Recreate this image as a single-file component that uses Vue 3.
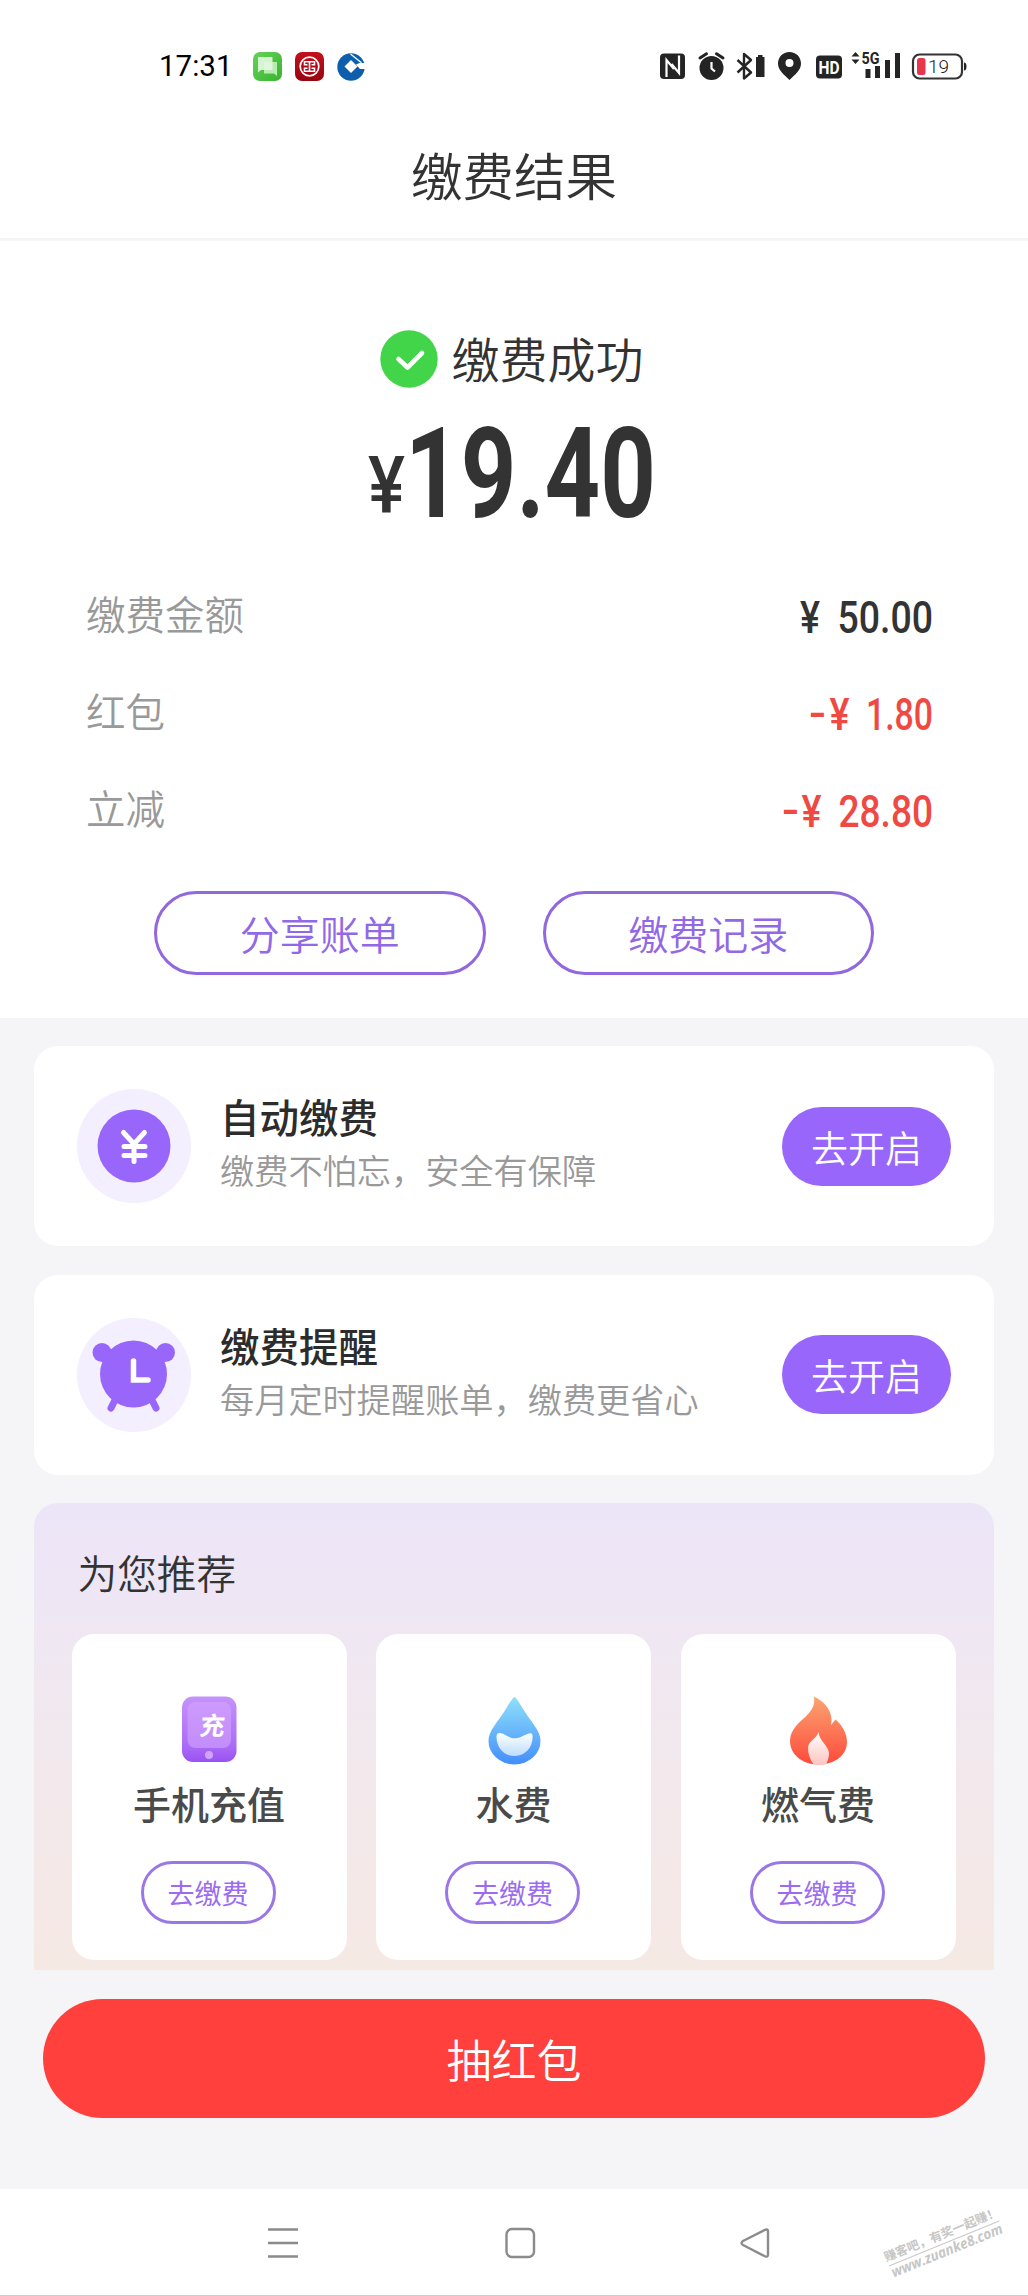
<script setup>
const bills = [
  { label: '缴费金额', minus: null, yen: 800, start: 837.5, value: '50.00' },
  { label: '红包', minus: 809, yen: 829.5, start: 866, value: '1.80', red: true },
  { label: '立减', minus: 782, yen: 801.5, start: 838.5, value: '28.80', red: true },
]
const services = [
  { icon: 'yen', title: '自动缴费', desc: '缴费不怕忘，安全有保障' },
  { icon: 'clock', title: '缴费提醒', desc: '每月定时提醒账单，缴费更省心' },
]
const recommends = [
  { icon: 'phone', name: '手机充值' },
  { icon: 'water', name: '水费' },
  { icon: 'fire', name: '燃气费' },
]
</script>

<template>
  <div class="screen">
    <header class="status">
      <span class="time">17:31</span>
      <svg class="apps" width="114" height="32" viewBox="252 51 114 32">
        <defs>
          <linearGradient id="msg" x1="0" y1="0" x2="1" y2="1"><stop offset="0" stop-color="#67d15c" /><stop offset="1" stop-color="#36b52c" /></linearGradient>
          <linearGradient id="bank" x1="0" y1="0" x2="0" y2="1"><stop offset="0" stop-color="#c4101f" /><stop offset="1" stop-color="#980510" /></linearGradient>
        </defs>
        <rect x="253" y="52" width="29" height="29" rx="7" fill="url(#msg)" />
        <path d="M264 62h13v14l-3-2.500h-10z" fill="#b9ecb2" />
        <path d="M258 57h14.500v13h-11.500l-3 2.500z" fill="#e3f8df" opacity=".9" />
        <rect x="295" y="52" width="29" height="29" rx="7" fill="url(#bank)" />
        <circle cx="309.500" cy="66.500" r="9.300" fill="none" stroke="#fff" stroke-width="1.700" />
        <path d="M304 61.700h11M304 71.300h11M309.500 62v9M304.500 61v3.800h3M314.500 61v3.800h-3M304.500 72v-3.800h3M314.500 72v-3.800h-3" fill="none" stroke="#fff" stroke-width="1.600" />
        <circle cx="351" cy="67" r="13.700" fill="#0d5fae" />
        <path d="M356 64.500l3.500-1.500H366v6h-6z" fill="#fff" />
        <path d="M350.500 54l11 8.800" stroke="#fff" stroke-width="1.300" />
        <path d="M351 60l6.500 6.500-6.500 6.500-6.500-6.500z" fill="#fff" />
      </svg>
      <svg class="signals" width="312" height="36" viewBox="658 48 312 36" fill="#242424">
        <rect x="660" y="53.500" width="25" height="25.500" rx="4" />
        <path d="M666.500 77V60l7.500 9M679 55.500V73l-7.500-9" fill="none" stroke="#fff" stroke-width="2.200" />
        <circle cx="711.500" cy="68" r="12" />
        <path d="M700 58l6.500-4.200M723 58l-6.500-4.200" stroke="#242424" stroke-width="3" stroke-linecap="round" />
        <path d="M711.500 62v6.500l3.500 3" fill="none" stroke="#fff" stroke-width="2.200" />
        <path d="M737.500 60l13.500 12.500-7 6V54l7 6-13.500 12.500" fill="none" stroke="#242424" stroke-width="2.400" stroke-linejoin="round" />
        <path d="M756 57h2v-2h4.500v2h2v20h-8.500z" />
        <path fill-rule="evenodd" d="M789.500 52c-6.500 0-11.500 5-11.500 11.500 0 7 6 11 11.500 16.500 5.500-5.500 11.500-9.500 11.500-16.500C801 57 796 52 789.500 52zm0 7a4 4 0 1 1 0 8 4 4 0 0 1 0-8z" />
        <rect x="816" y="55.500" width="26" height="23" rx="4" />
        <text x="818.500" y="73.500" fill="#fff" font-family="Roboto, sans-serif" font-weight="700" font-size="18" textLength="21" lengthAdjust="spacingAndGlyphs">HD</text>
        <path d="M851.500 56.500l4-4.500 4 4.500zM851.500 59.500l4 4.500 4-4.500z" />
        <text x="861.500" y="63.500" font-family="Roboto, sans-serif" font-weight="700" font-size="16" textLength="18" lengthAdjust="spacingAndGlyphs">5G</text>
        <path d="M865.500 69h5v9h-5zM875 66h5v12h-5zM885 60h5v18h-5zM895 53h5v25h-5z" />
        <rect x="913" y="54.500" width="49" height="24" rx="6.500" fill="none" stroke="#333" stroke-width="2.200" />
        <path d="M964 62.500q2.500 0 2.500 4t-2.500 4z" />
        <rect x="917" y="58" width="8.500" height="17" rx="2.500" fill="#e8354b" />
        <text x="928" y="73.300" font-family="Roboto, sans-serif" font-size="19">19</text>
      </svg>
    </header>
    <div class="title">缴费结果</div>

    <section class="result">
      <div class="success">
        <svg width="58" height="58" viewBox="0 0 58 58"><circle cx="29" cy="29" r="28.700" fill="#42d549" /><path d="M18.500 29l9 8.500L42 23" fill="none" stroke="#fff" stroke-width="4.600" stroke-linecap="round" stroke-linejoin="round" /></svg>
        <span>缴费成功</span>
      </div>
      <svg class="total" width="1028" height="130" viewBox="0 410 1028 130" font-family="Roboto, sans-serif" font-weight="700" fill="#333">
        <text x="368" y="513" font-size="79" font-weight="500" textLength="37" lengthAdjust="spacingAndGlyphs">¥</text>
        <text x="405" y="516.500" font-size="125.500" textLength="251" lengthAdjust="spacingAndGlyphs">19.40</text>
      </svg>
      <div v-for="b in bills" :key="b.label" class="bill" :class="{ red: b.red }">
        <span>{{ b.label }}</span>
        <svg width="170" height="60" viewBox="774 586 170 60" font-family="Roboto, sans-serif" font-weight="500" font-size="43.500">
          <text v-if="b.minus" :x="b.minus" y="631" textLength="17" lengthAdjust="spacingAndGlyphs">-</text>
          <text :x="b.yen" y="632.500" textLength="20" lengthAdjust="spacingAndGlyphs">¥</text>
          <text :x="b.start" y="632.500" :textLength="933 - b.start" lengthAdjust="spacingAndGlyphs">{{ b.value }}</text>
        </svg>
      </div>
      <div class="actions">
        <button>分享账单</button>
        <button>缴费记录</button>
      </div>
    </section>

    <main>
      <article v-for="s in services" :key="s.title" class="service">
        <svg class="badge" width="114" height="114" viewBox="0 0 114 114">
          <circle cx="57" cy="57" r="57" fill="#f3effe" />
          <g v-if="s.icon === 'yen'">
            <circle cx="57" cy="57" r="36.500" fill="#9966fc" />
            <path d="M46.500 43.500L57 55l10.500-11.500M57 55v17.500M47 57.500h21M47 66.500h21" fill="none" stroke="#fff" stroke-width="5" stroke-linecap="round" stroke-linejoin="round" />
          </g>
          <g v-else fill="#9966fc">
            <circle cx="25" cy="34.500" r="9.500" /><circle cx="88.500" cy="34.500" r="9.500" />
            <circle cx="56.500" cy="56" r="33.500" />
            <path d="M39 80l-5 10M74 80l5 10" stroke="#9966fc" stroke-width="7" stroke-linecap="round" />
            <path d="M56.500 43v19H71" fill="none" stroke="#fff" stroke-width="5.500" stroke-linecap="round" />
          </g>
        </svg>
        <div class="copy"><h3>{{ s.title }}</h3><p>{{ s.desc }}</p></div>
        <button>去开启</button>
      </article>

      <section class="recommend">
        <h2>为您推荐</h2>
        <div class="cards">
          <div v-for="r in recommends" :key="r.name" class="card">
            <svg width="64" height="72" viewBox="0 0 64 72">
              <defs>
                <linearGradient id="ph" x1="0" y1="0" x2="0" y2="1"><stop offset="0" stop-color="#c593fb" /><stop offset=".75" stop-color="#ab6cf5" /><stop offset="1" stop-color="#9a52f3" /></linearGradient>
                <linearGradient id="dr" x1="0" y1="0" x2="0" y2="1"><stop offset="0" stop-color="#8fe0fa" /><stop offset="1" stop-color="#438efb" /></linearGradient>
                <linearGradient id="fi" x1="0" y1="0" x2="0" y2="1"><stop offset="0" stop-color="#fca471" /><stop offset="1" stop-color="#fc4b3c" /></linearGradient>
                <linearGradient id="wv" x1="0" y1="0" x2="0" y2="1"><stop offset="0" stop-color="#fff" /><stop offset="1" stop-color="#bcdcfe" /></linearGradient>
                <linearGradient id="fl" x1="0" y1="0" x2="0" y2="1"><stop offset="0" stop-color="#fff" /><stop offset="1" stop-color="#fdc4c0" /></linearGradient>
              </defs>
              <g v-if="r.icon === 'phone'">
                <rect x="5" y="2.500" width="54.500" height="65.500" rx="11" fill="url(#ph)" />
                <rect x="10.500" y="8" width="43.500" height="46" rx="8" fill="#d3a4ff" opacity=".6" />
                <circle cx="32" cy="61" r="4" fill="#cfa5fb" />
                <text x="40" y="41" text-anchor="middle" fill="#fff" class="glyph" font-size="25" transform="skewX(-8)" textLength="24">充</text>
              </g>
              <g v-else-if="r.icon === 'water'">
                <path d="M32.500 3C34 3 38 10 43 18 50 29 58.500 37 58.500 47a26 23.500 0 0 1-52 0C6.500 37 15 29 22 18 27 10 31 3 32.500 3z" fill="url(#dr)" />
                <path d="M14.500 42.500c0-5 5-4 9-1.500 4 2.500 9.500 4.500 14 2.500 5-2 12-7 13-2.500 1 11-6 21-18 21-11 0-18-8.500-18-19.500z" fill="url(#wv)" />
              </g>
              <g v-else>
                <path d="M28 2.500C38 7 45.500 16 45.500 26c0 2-.5 3.500-.5 5l4.500-5.500C56 31 61 39 61 48c0 13-12 22.500-28.500 22.500S4 60 4 47c0-9 6-16 13-22C25 18 29.500 12 28 2.500z" fill="url(#fi)" />
                <path d="M32.500 38c.5 9 10.500 14 10.500 21.500 0 4-1.500 8-3 11-5 .8-8 .8-12 .3C24 66 22 60 22 54c0-7 8.500-9 10.500-16z" fill="url(#fl)" />
              </g>
            </svg>
            <div class="name">{{ r.name }}</div>
            <button>去缴费</button>
          </div>
        </div>
      </section>
      <button class="lottery">抽红包</button>
    </main>

    <nav>
      <svg width="1028" height="107" viewBox="0 2189 1028 107" fill="none" stroke="#8b8b8b" stroke-width="2.400">
        <path d="M268 2229.500h30M268 2243h30M268 2256.500h30" />
        <rect x="506.500" y="2229" width="27.500" height="28" rx="5.500" />
        <path d="M743 2241l22-11.200q3-1.200 3 1.700v23q0 3-3 1.800L743 2245q-3-2 0-4z" stroke-linejoin="round" />
        <g transform="translate(889 2266) rotate(-22.200)" fill="#c6c6c6" stroke="none" font-weight="700">
          <text class="mark" x="-1" y="-5" font-size="12.300">赚客吧，有奖一起赚！</text>
          <path d="M0 0h119" stroke="#c9c9c9" stroke-width="1" />
          <text x="0" y="12.500" font-family="Open Sans, sans-serif" font-style="italic" font-size="14.500" textLength="119" lengthAdjust="spacingAndGlyphs">www.zuanke8.com</text>
        </g>
      </svg>
    </nav>
  </div>
</template>

<style>
body { margin: 0; background: #fff; }
</style>

<style scoped>
* { box-sizing: border-box; }
.screen { width: 1028px; height: 2296px; overflow: hidden; background: #fff; color: #333; font-family: "Noto Sans CJK SC", sans-serif; font-weight: 350; display: flex; flex-direction: column; }
svg { overflow: visible; }
button { font: inherit; padding: 0; background: none; border: 0; }
h2, h3, p { margin: 0; font-weight: inherit; }
.status { height: 132px; flex: none; display: flex; align-items: flex-start; padding: 48px 58px 0 159px; }
.time { width: 93px; font: 400 29.500px/37px Roboto, sans-serif; color: #000; }
.apps { margin-top: 3px; }
.signals { margin-left: auto; }
.title { height: 109px; flex: none; border-bottom: 3px solid #f5f5f5; font-size: 51.500px; line-height: 84px; text-align: center; }
.result { height: 777px; flex: none; display: flex; flex-direction: column; }
.success { margin-top: 88px; height: 60px; display: flex; align-items: center; justify-content: center; gap: 13px; font-size: 48px; line-height: 60px; padding-right: 4px; }
.success span { padding-bottom: 4px; }
.total { display: block; margin-top: 21px; height: 130px; flex: none; }
.bill { height: 97px; flex: none; display: flex; align-items: center; justify-content: space-between; padding: 0 84px 0 86px; font-size: 39.500px; color: #999; }
.bill span { padding-bottom: 6px; }
.total + .bill { margin-top: 27px; }
.bill svg { fill: #333; }
.bill.red svg { fill: #f04842; }
.actions { display: flex; gap: 57px; padding-left: 154px; margin-top: 33px; }
.actions button { width: 331.500px; height: 83.500px; border: 3px solid #9168dd; border-radius: 42px; color: #9168e6; font-size: 40px; line-height: 78px; }
main { height: 1171px; flex: none; background: #f5f5f8; padding: 28px 34px 0; display: flex; flex-direction: column; }
.service { height: 200px; flex: none; margin-bottom: 28.500px; border-radius: 24px; background: #fff; display: flex; align-items: center; padding: 0 43px 0 43px; }
.copy { margin-left: 29px; padding-bottom: 8px; flex: 1; }
.copy h3 { font-size: 39.500px; line-height: 54px; font-weight: 500; color: #2c2c2c; }
.copy p { font-size: 34.200px; line-height: 52px; color: #999; }
.service button { width: 169px; height: 79px; border-radius: 40px; background: #9966fc; color: #fff; font-size: 37px; line-height: 80px; }
.recommend { height: 467px; flex: none; border-radius: 24px 24px 0 0; background: linear-gradient(#ece5f8, #f1e8ef 45%, #f6e9e4); padding: 38px 38px 0 37.500px; }
.recommend h2 { font-size: 39.700px; line-height: 62px; height: 93px; padding-left: 6px; }
.cards { display: flex; gap: 29.500px; }
.card { width: 275px; height: 326px; background: #fff; border-radius: 22px; display: flex; flex-direction: column; align-items: center; padding-top: 60px; }
.glyph { font-weight: 700; font-family: "Noto Sans CJK SC", sans-serif; }
.name { margin-top: 9px; font-size: 38px; line-height: 56px; font-weight: 500; color: #4a4a4a; }
.card button { margin: 30px 2px 0 0; width: 135px; height: 63px; border: 3px solid #9b76e6; border-radius: 32px; color: #9b6cf0; font-size: 27px; line-height: 57px; font-weight: 400; }
.lottery { margin: 29px 0 0 9px; width: 942px; height: 119px; flex: none; border-radius: 60px; background: #ff403c; color: #fff; font-size: 45px; line-height: 117px; }
nav { height: 107px; flex: none; border-bottom: 1px solid #ccc; }
nav svg { display: block; }
.mark { font-family: "Noto Sans CJK SC", sans-serif; }
</style>
